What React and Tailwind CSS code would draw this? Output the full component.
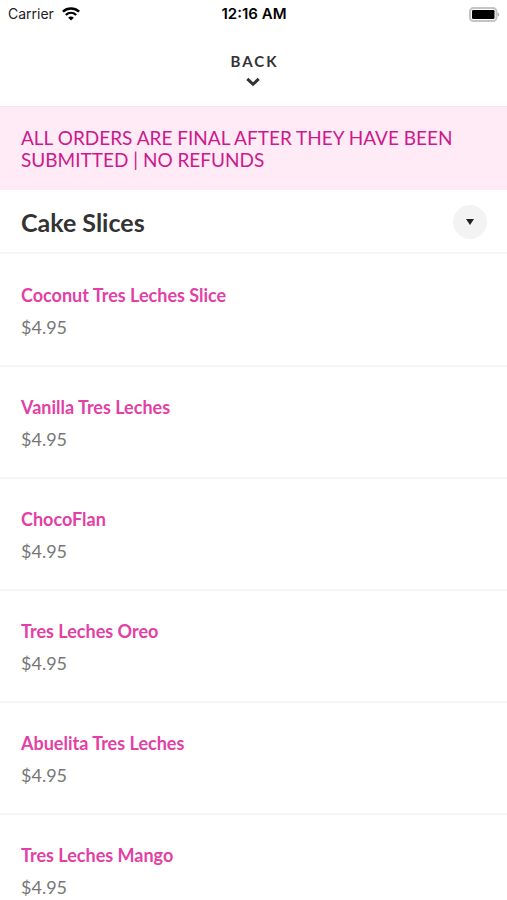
const items = [
  { name: 'Coconut Tres Leches Slice', price: '$4.95' },
  { name: 'Vanilla Tres Leches', price: '$4.95' },
  { name: 'ChocoFlan', price: '$4.95' },
  { name: 'Tres Leches Oreo', price: '$4.95' },
  { name: 'Abuelita Tres Leches', price: '$4.95' },
  { name: 'Tres Leches Mango', price: '$4.95' },
];

function WifiIcon() {
  return (
    <svg viewBox="0 0 18 14" className="h-[14px] w-[18px]" fill="none" aria-hidden="true">
      <path d="M0.900 4.600C5.500 0.400 12.500 0.400 17.100 4.600" stroke="#000" strokeWidth="2.600" />
      <path d="M3.800 8C6.900 5.200 11.100 5.200 14.200 8" stroke="#000" strokeWidth="2.300" />
      <path d="M9 13.600L6.200 10.700C7.800 9.200 10.200 9.200 11.800 10.700Z" fill="#000" />
    </svg>
  );
}

function BatteryIcon() {
  return (
    <svg viewBox="0 0 31 15" className="h-[15px] w-[31px]" fill="none" aria-hidden="true">
      <rect x="1" y="1" width="26.500" height="13" rx="3.500" stroke="#c4c4c4" strokeWidth="2" />
      <rect x="3" y="3" width="22.500" height="9" rx="1.200" fill="#000" />
      <path d="M28.500 5.500C31 6 31 9 28.500 9.500Z" fill="#b5b5b5" />
    </svg>
  );
}

function StatusBar() {
  return (
    <div className="grid h-7 grid-cols-3 items-center pr-[7px] pl-2 font-['Inter','Liberation_Sans',sans-serif] text-black">
      <div className="flex items-center gap-2">
        <span className="text-sm text-[#222]">Carrier</span>
        <WifiIcon />
      </div>
      <span className="text-center text-[15px] font-semibold">12:16 AM</span>
      <div className="flex justify-end">
        <BatteryIcon />
      </div>
    </div>
  );
}

export default function App() {
  return (
    <div className="flex h-screen flex-col bg-white font-['Lato','Open_Sans',sans-serif] text-[#333]">
      <header className="shrink-0">
        <StatusBar />
        <div className="flex justify-center pt-6 pb-[19px]">
          <button type="button" className="flex flex-col items-center gap-[7px]">
            <span className="pl-0.5 text-[15px] leading-[18px] font-bold tracking-[2px]">BACK</span>
            <svg viewBox="0 0 14 10" className="h-2.5 w-3.5" fill="none" aria-hidden="true">
              <path d="M1.300 1.900L7 7.300L12.700 1.900" stroke="#333" strokeWidth="3" />
            </svg>
          </button>
        </div>
      </header>
      <p className="shrink-0 border-t border-[#f8e6ef] bg-[#ffebf6] px-[21px] pt-5 pb-[19px] text-[19px] leading-[22px] text-[#cb1a8c]">
        ALL ORDERS ARE FINAL AFTER THEY HAVE BEEN SUBMITTED | NO REFUNDS
      </p>
      <main className="min-h-0 flex-1 overflow-y-auto [scrollbar-width:none]">
        <div className="flex h-16 items-center justify-between border-b-2 border-[#f5f5f5] pt-0.5 pr-5 pl-[21px]">
          <h1 className="text-[25px] leading-8 font-bold">Cake Slices</h1>
          <button
            type="button"
            aria-label="Choose category"
            className="flex size-[34px] items-center justify-center rounded-full bg-[#f3f3f3]"
          >
            <svg viewBox="0 0 8 6" className="h-1.5 w-2" aria-hidden="true">
              <path d="M0 0H8L4 6Z" fill="#222" />
            </svg>
          </button>
        </div>
        <ul className="pt-px">
          {items.map((item) => (
            <li key={item.name} className="border-b-2 border-[#f5f5f5]">
              <button type="button" className="block w-full px-[21px] pt-7 pb-[26px] text-left text-lg">
                <span className="block leading-6 font-bold text-[#e340a6]">{item.name}</span>
                <span className="mt-2 block leading-6 text-[#777]">{item.price}</span>
              </button>
            </li>
          ))}
        </ul>
      </main>
    </div>
  );
}
